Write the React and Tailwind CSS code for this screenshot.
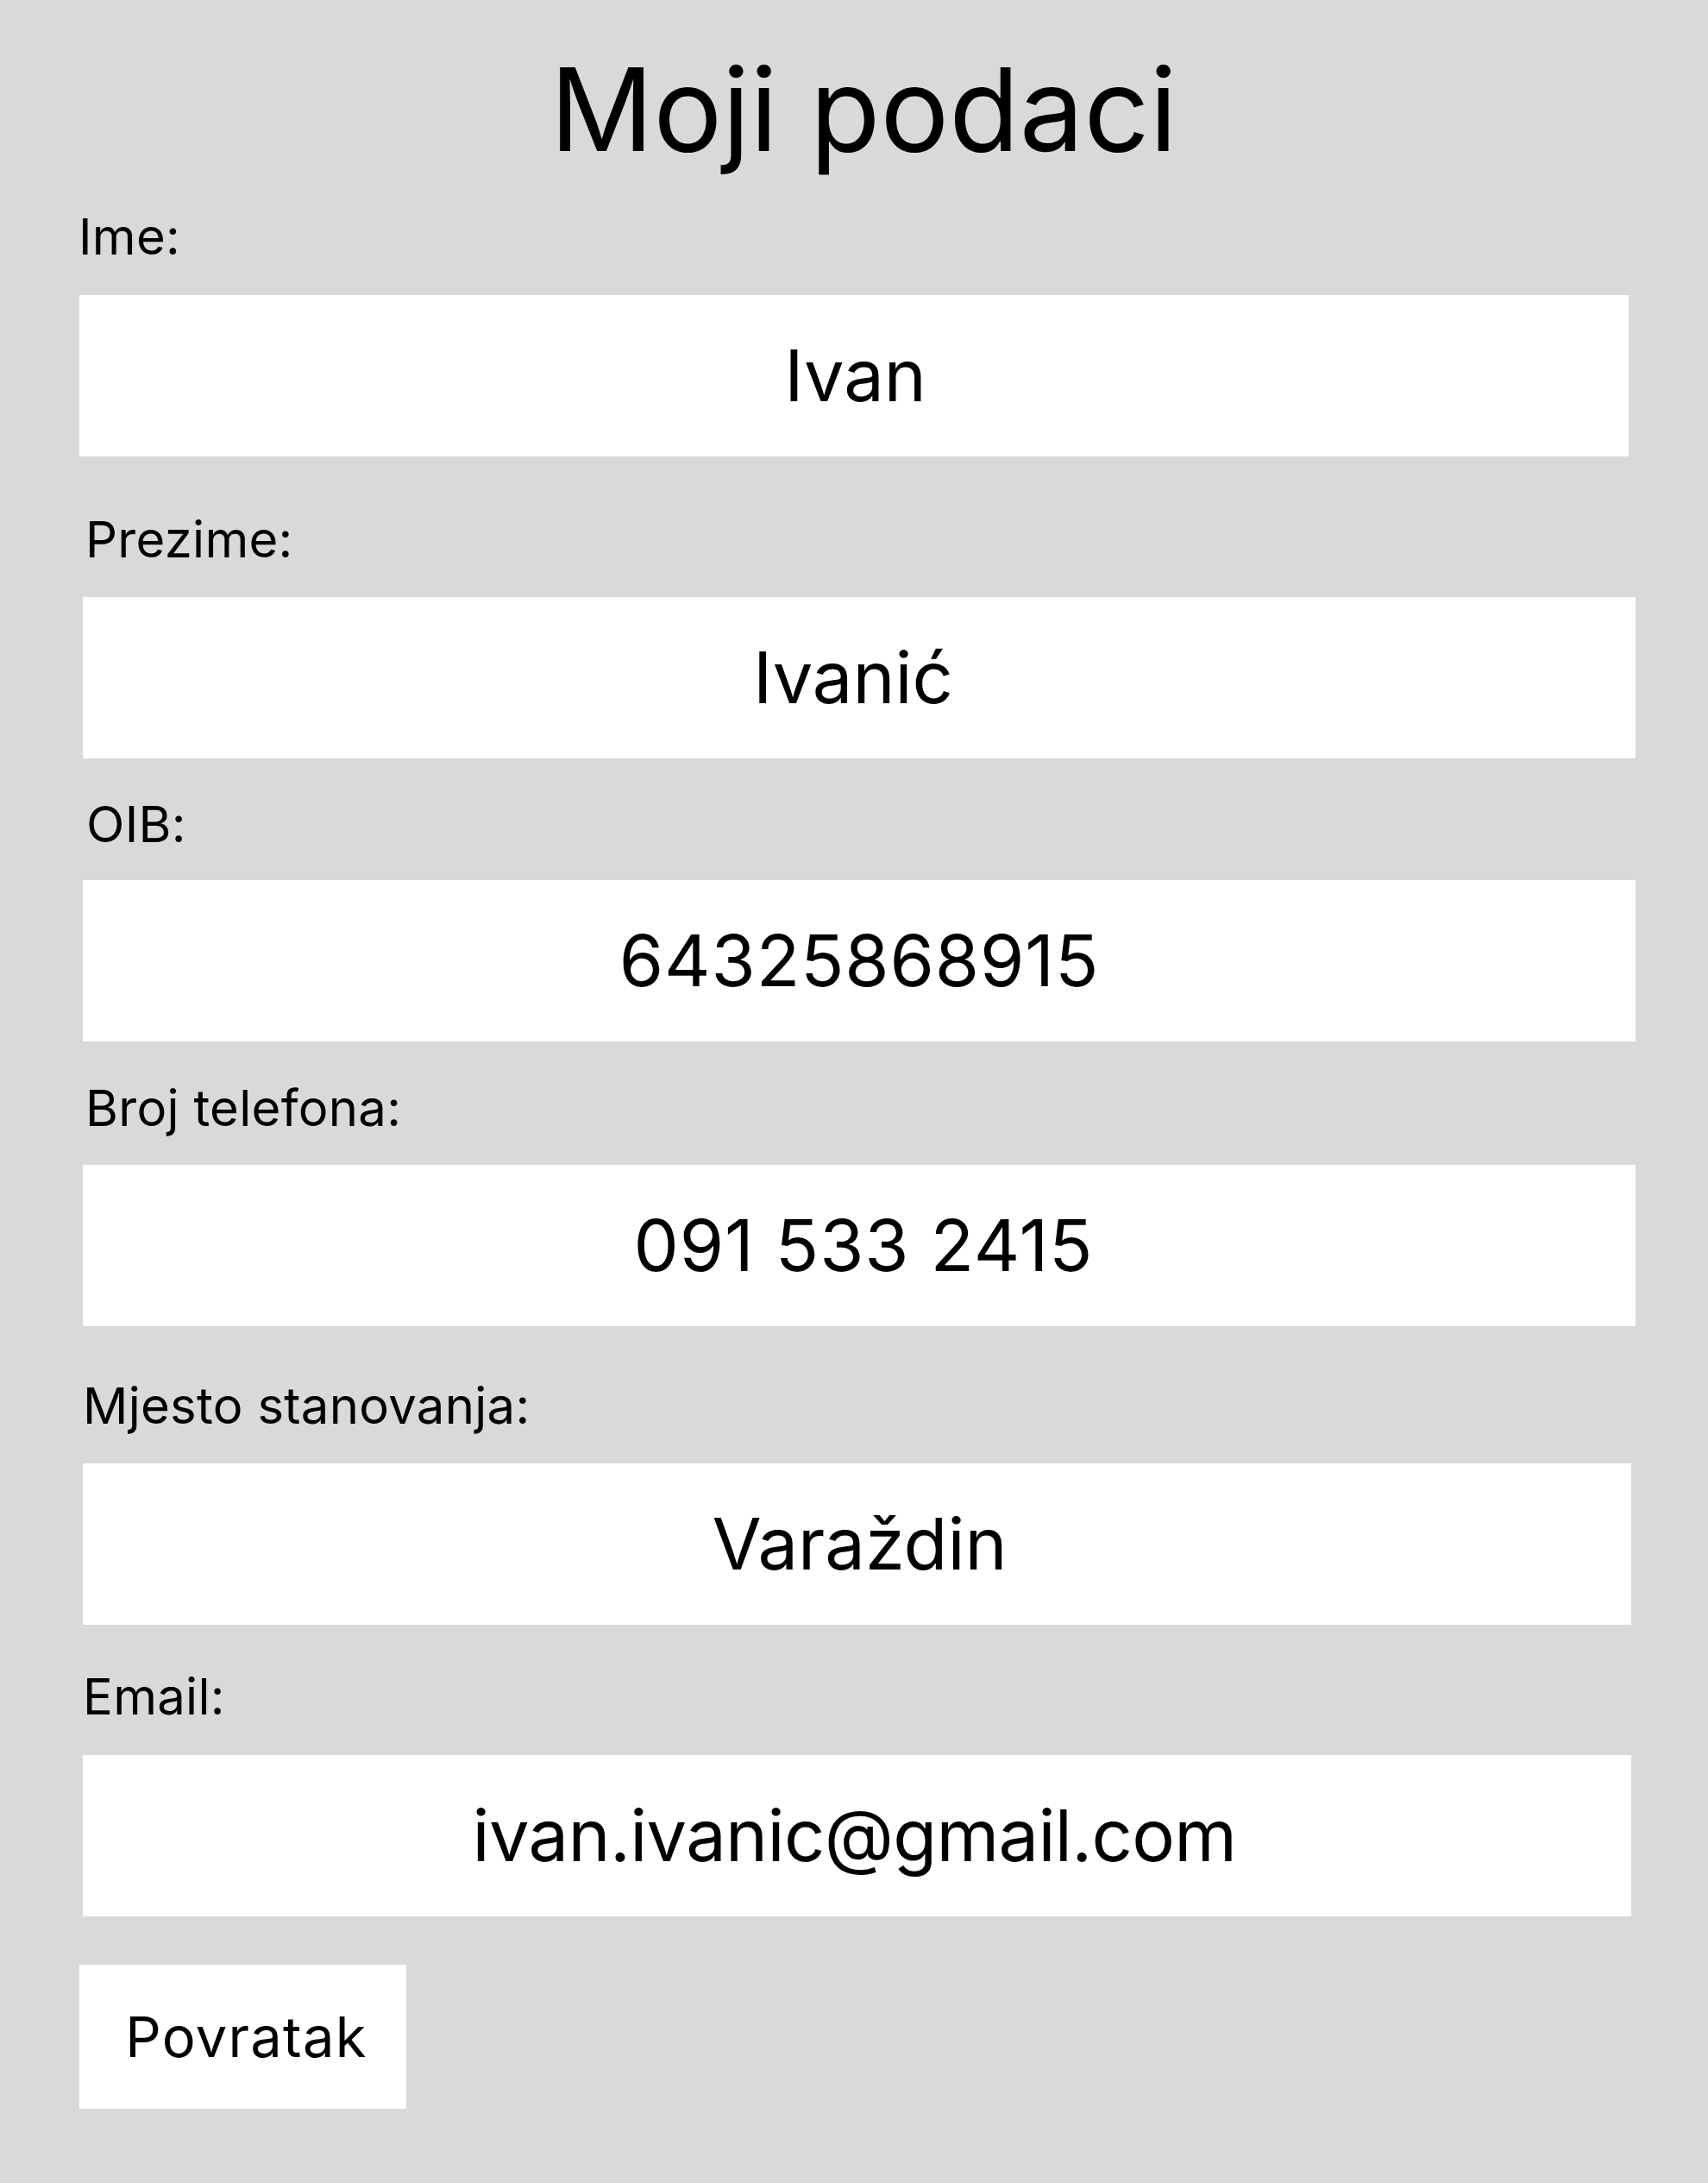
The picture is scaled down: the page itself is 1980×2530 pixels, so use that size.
import React from "react";

const fields = [
  { label: "Ime:", value: "Ivan", labelClass: "mt-[53px] ml-[91px]", boxClass: "mt-[39px] ml-[92px] w-[1796px] pl-[3px]" },
  { label: "Prezime:", value: "Ivanić", labelClass: "mt-[68px] ml-[99px]", boxClass: "mt-[38px] ml-[96px] w-[1800px] pr-[14px]" },
  { label: "OIB:", value: "64325868915", labelClass: "mt-[48px] ml-[100px]", boxClass: "mt-[36px] ml-[96px] w-[1800px] tracking-[0.01em]" },
  { label: "Broj telefona:", value: "091 533 2415", labelClass: "mt-[49px] ml-[99px]", boxClass: "mt-[37px] ml-[96px] w-[1800px] pl-[10px] tracking-[0.01em]" },
  { label: "Mjesto stanovanja:", value: "Varaždin", labelClass: "mt-[64px] ml-[96px]", boxClass: "mt-[38px] ml-[96px] w-[1795px] pl-[6px]" },
  { label: "Email:", value: "ivan.ivanic@gmail.com", labelClass: "mt-[55px] ml-[96px]", boxClass: "mt-[39px] ml-[96px] w-[1795px] tracking-[-0.008em] pr-[6px]" },
];

const App = () => {
  return (
    <div
      className="w-[1980px] min-h-[2530px] bg-[#d9d9d9] text-black"
      style={{ fontFamily: "Inter, 'Noto Sans', sans-serif" }}
    >
      <div className="flex flex-col pt-[60px]">
        <h1 className="text-center text-[133px] leading-none font-normal pl-[22px]">
          Moji podaci
        </h1>

        {fields.map((field) => (
          <React.Fragment key={field.label}>
            <label className={`block text-[58px] leading-[57px] tracking-[0.005em] ${field.labelClass}`}>
              {field.label}
            </label>
            <div
              className={`flex h-[187px] items-center justify-center bg-white text-[83px] leading-none ${field.boxClass}`}
            >
              {field.value}
            </div>
          </React.Fragment>
        ))}

        <div className="mt-[56px] ml-[92px]">
          <button className="flex h-[167px] w-[379px] items-center justify-center bg-white text-[65px] leading-none tracking-[0.02em] pl-[8px]">
            Povratak
          </button>
        </div>
      </div>
    </div>
  );
};

export default App;
